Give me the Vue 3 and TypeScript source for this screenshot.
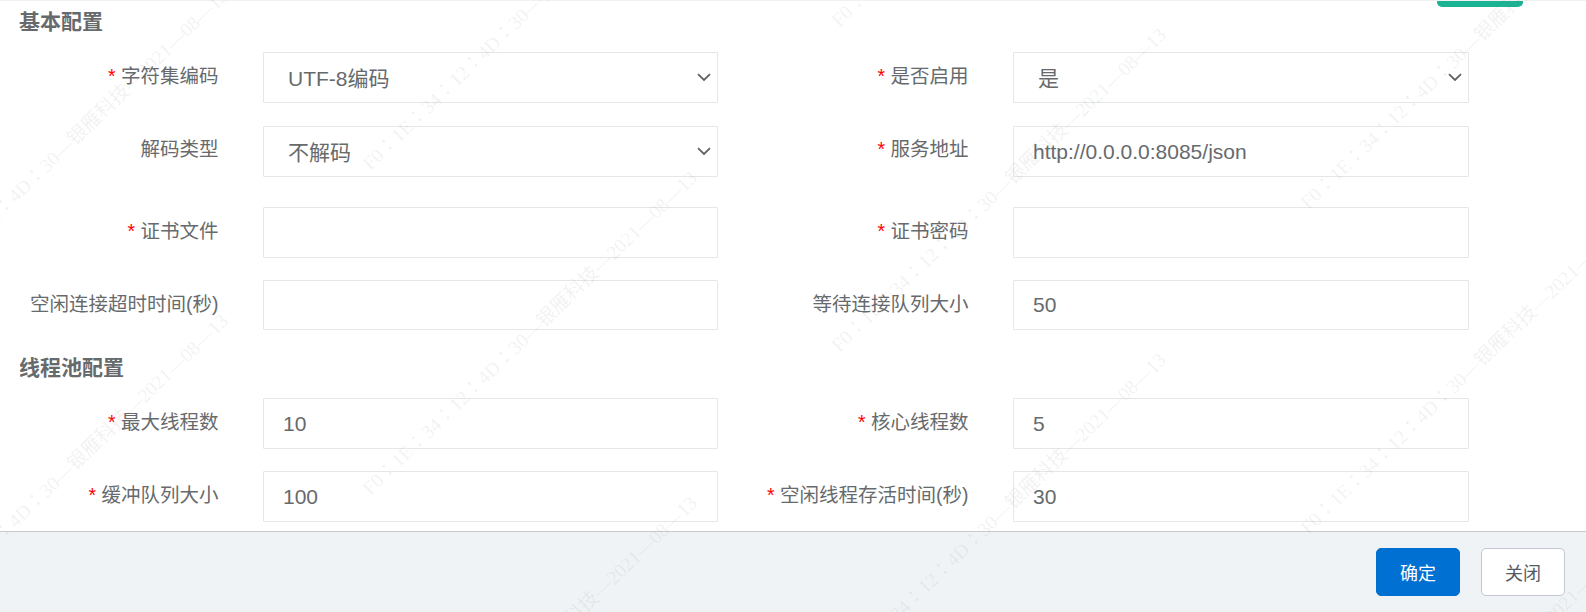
<script setup lang="ts">
interface Field {
  label: string
  required?: boolean
  value?: string
  options?: string[]
}
interface Row {
  cls: string
  left: Field
  right: Field
}

const basicRows: Row[] = [
  {
    cls: 'r1',
    left: { label: '字符集编码', required: true, value: 'UTF-8编码', options: ['UTF-8编码', 'GBK编码'] },
    right: { label: '是否启用', required: true, value: '是', options: ['是', '否'] }
  },
  {
    cls: 'r2',
    left: { label: '解码类型', value: '不解码', options: ['不解码', '解码'] },
    right: { label: '服务地址', required: true, value: 'http://0.0.0.0:8085/json' }
  },
  {
    cls: 'r3',
    left: { label: '证书文件', required: true, value: '' },
    right: { label: '证书密码', required: true, value: '' }
  },
  {
    cls: 'r4',
    left: { label: '空闲连接超时时间(秒)', value: '' },
    right: { label: '等待连接队列大小', value: '50' }
  }
]

const poolRows: Row[] = [
  {
    cls: 'r5',
    left: { label: '最大线程数', required: true, value: '10' },
    right: { label: '核心线程数', required: true, value: '5' }
  },
  {
    cls: 'r6',
    left: { label: '缓冲队列大小', required: true, value: '100' },
    right: { label: '空闲线程存活时间(秒)', required: true, value: '30' }
  }
]

const watermarkText = 'F0：1E：34：12：4D：30—银雁科技—2021—08—13'

const marks: { left: string; top: string }[] = []
for (let col = -1; col <= 3; col++) {
  for (let row = -2; row <= 4; row++) {
    const x = 373 + col * 469
    const y = 174 - col * 143 + row * 325
    if (y > -60 && y < 1000) {
      marks.push({ left: `${x}px`, top: `${y}px` })
    }
  }
}
</script>

<template>
  <div class="page">
    <div class="content">
      <div class="clipped-btn"></div>
      <h3 class="section first">基本配置</h3>
      <div v-for="row in basicRows" :key="row.cls" class="row" :class="row.cls">
        <div v-for="(f, i) in [row.left, row.right]" :key="f.label" class="field" :class="i === 0 ? 'left' : 'right'">
          <label class="label"><span v-if="f.required" class="star">* </span>{{ f.label }}</label>
          <div class="control">
            <template v-if="f.options">
              <select class="input select" :value="f.value">
                <option v-for="o in f.options" :key="o" :value="o">{{ o }}</option>
              </select>
              <svg class="chevron" viewBox="0 0 14 9" width="14" height="9" aria-hidden="true">
                <path d="M1 1.2 L7 7 L13 1.2" fill="none" stroke="#5f6266" stroke-width="1.8" />
              </svg>
            </template>
            <input v-else class="input" type="text" :value="f.value" readonly />
          </div>
        </div>
      </div>
      <h3 class="section second">线程池配置</h3>
      <div v-for="row in poolRows" :key="row.cls" class="row" :class="row.cls">
        <div v-for="(f, i) in [row.left, row.right]" :key="f.label" class="field" :class="i === 0 ? 'left' : 'right'">
          <label class="label"><span v-if="f.required" class="star">* </span>{{ f.label }}</label>
          <div class="control">
            <input class="input" type="text" :value="f.value" readonly />
          </div>
        </div>
      </div>
    </div>
    <div class="footer">
      <button class="btn primary" type="button">确定</button>
      <button class="btn plain" type="button">关闭</button>
    </div>
    <div class="watermarks" aria-hidden="true">
      <span v-for="(m, i) in marks" :key="i" class="mark" :style="m">{{ watermarkText }}</span>
    </div>
  </div>
</template>

<style scoped>
.page {
  position: relative;
  width: 1586px;
  height: 612px;
  display: flex;
  flex-direction: column;
  overflow: hidden;
  background: #fff;
  color: #676a6c;
  font-family: "Liberation Sans", "Noto Sans CJK SC", sans-serif;
}
.content {
  position: relative;
  flex: 1;
  min-height: 0;
  border-top: 1px solid #f1f1f1;
}
.clipped-btn {
  position: absolute;
  top: 0;
  left: 1437px;
  width: 86px;
  height: 6px;
  background: #1ab394;
  border-radius: 0 0 5px 5px;
}
.section {
  margin: 0;
  padding-left: 19px;
  font-size: 21px;
  line-height: 30px;
  font-weight: 700;
}
.section.first {
  margin-top: 6px;
}
.section.second {
  margin-top: 23px;
  margin-bottom: 15px;
}
.row {
  display: flex;
  height: 51px;
}
.r1 { margin-top: 15px; }
.r2 { margin-top: 23px; }
.r3 { margin-top: 30px; }
.r4 { margin-top: 22px; height: 50px; }
.r6 { margin-top: 22px; }
.field {
  display: flex;
  align-items: center;
  gap: 44.5px;
}
.field.left {
  width: 717.5px;
}
.field.left .label {
  width: 218.5px;
}
.field.left .control {
  width: 454.5px;
}
.field.right .label {
  width: 251px;
}
.field.right .control {
  width: 456px;
}
.label {
  flex: none;
  margin-top: -3px;
  text-align: right;
  font-size: 19.5px;
  line-height: 28px;
  white-space: pre;
}
.r2 .label {
  margin-top: -5px;
}
.star {
  color: #f00;
}
.control {
  position: relative;
  flex: none;
  height: 100%;
}
.input {
  display: block;
  box-sizing: border-box;
  width: 100%;
  height: 100%;
  margin: 0;
  padding: 0 19px;
  border: 1px solid #e5e6e7;
  border-radius: 1px;
  background: #fff;
  color: #676a6c;
  font-family: inherit;
  font-size: 21px;
  outline: none;
}
.select {
  appearance: none;
  padding-top: 2px;
  padding-left: 24px;
  padding-right: 34px;
}
.chevron {
  position: absolute;
  top: 21px;
  right: 7px;
}
.footer {
  flex: none;
  box-sizing: border-box;
  height: 81px;
  display: flex;
  justify-content: flex-end;
  align-items: flex-start;
  gap: 21px;
  padding: 16px 21px 0 0;
  border-top: 1px solid #c9cacb;
  background: #eff3f6;
}
.btn {
  box-sizing: border-box;
  height: 48px;
  margin: 0;
  padding: 0;
  border-radius: 5px;
  font-family: inherit;
  font-size: 18px;
}
.primary {
  width: 84px;
  border: 1px solid #006fcb;
  background: #0070d2;
  color: #fff;
}
.plain {
  width: 84px;
  border: 1px solid #c3c8d0;
  background: #fff;
  color: #555b63;
}
.watermarks {
  position: absolute;
  inset: 0;
  pointer-events: none;
  overflow: hidden;
}
.mark {
  position: absolute;
  transform-origin: 0 100%;
  transform: translateY(-100%) rotate(-44deg);
  white-space: nowrap;
  font-family: "Liberation Serif", "Noto Sans CJK TC", serif;
  font-size: 19.5px;
  line-height: 20px;
  color: rgba(120, 120, 120, 0.1);
}
</style>
